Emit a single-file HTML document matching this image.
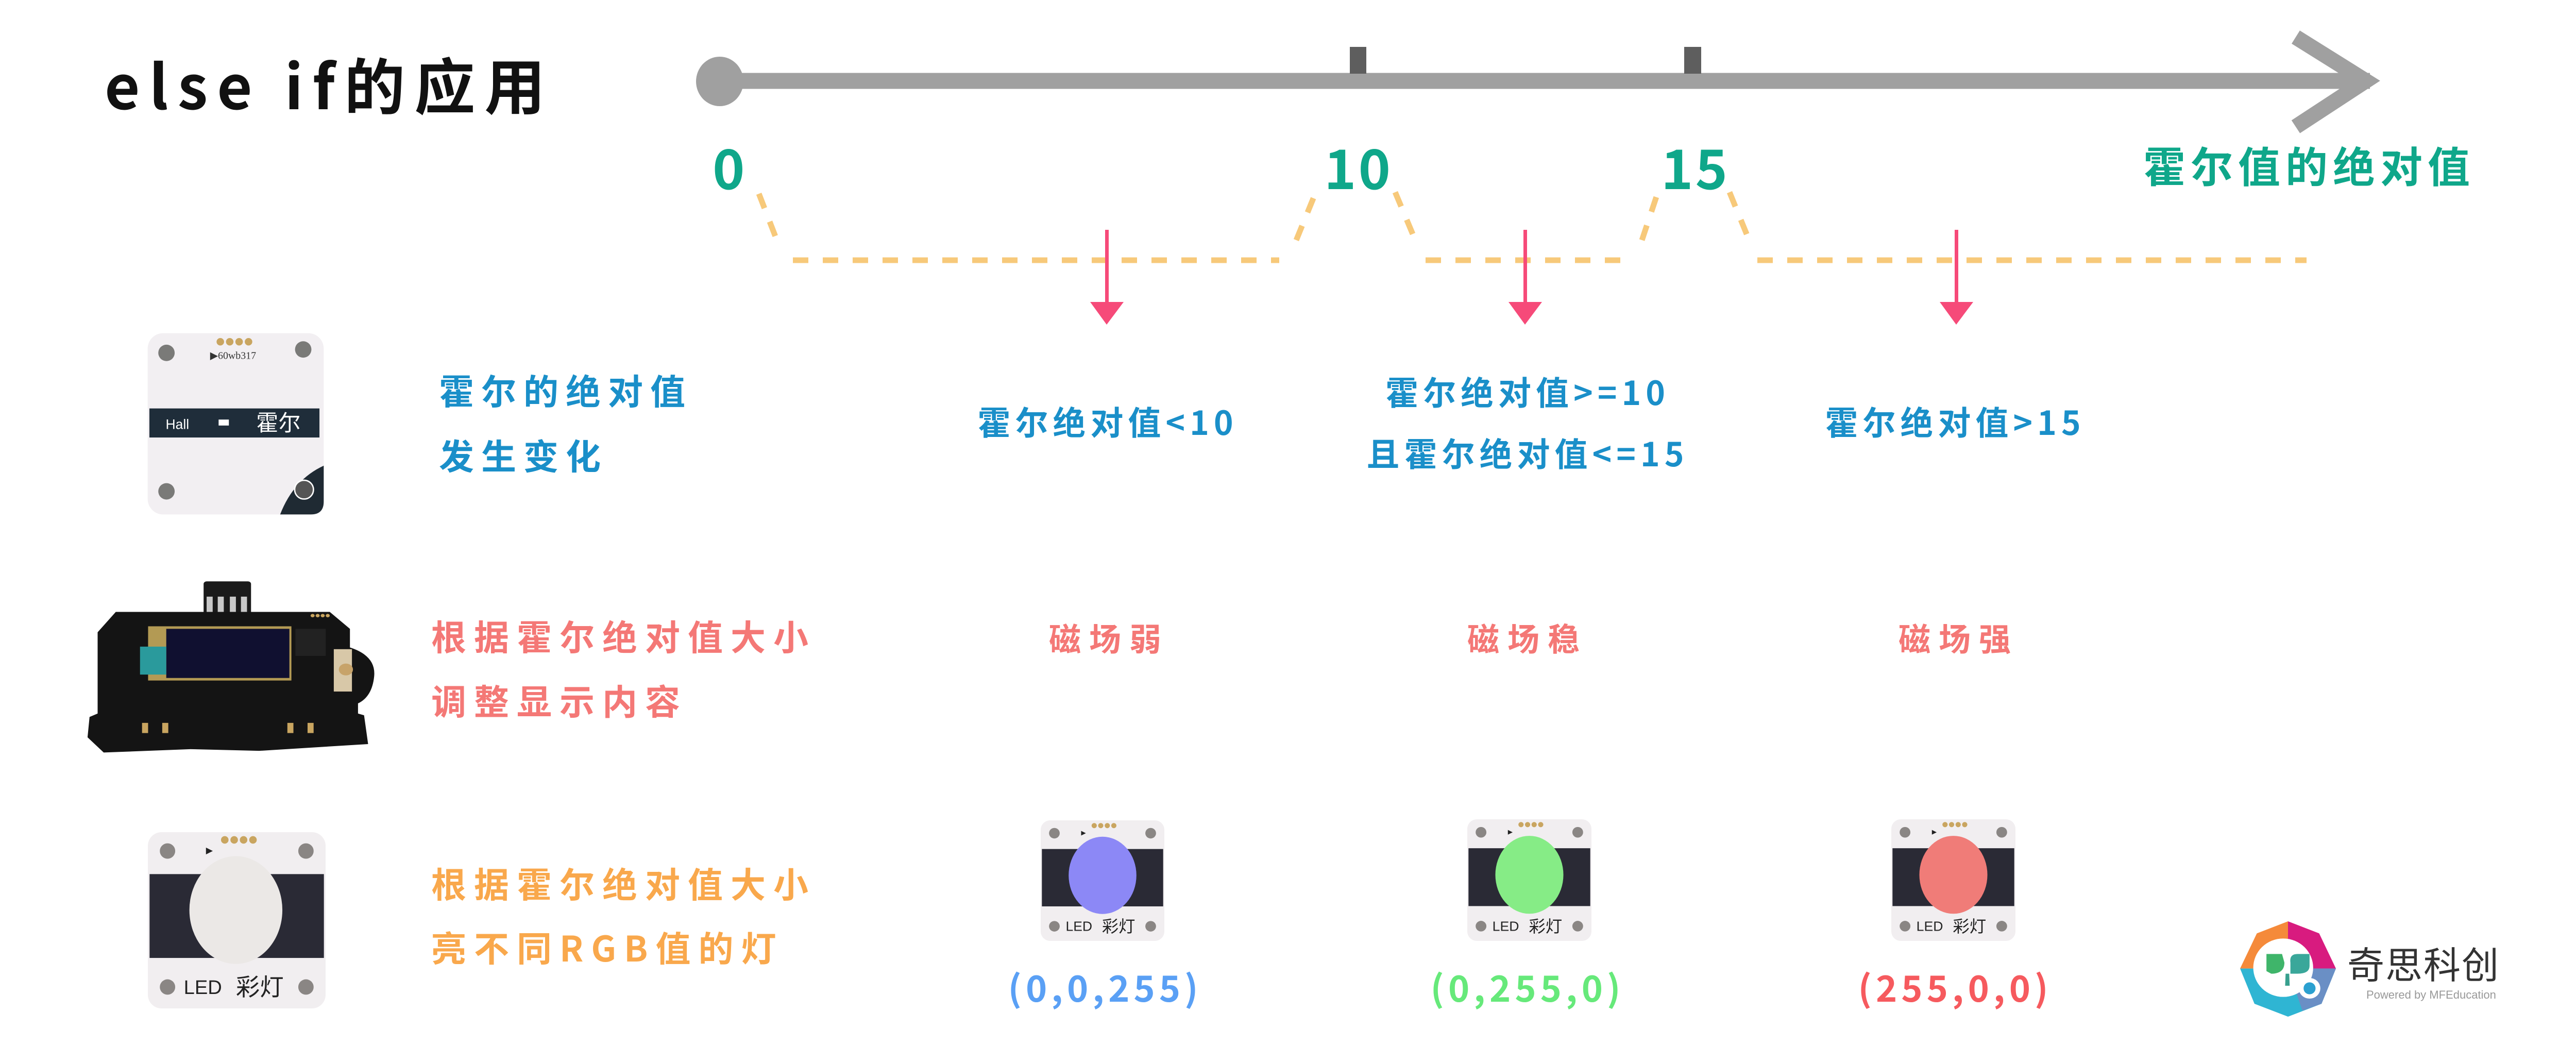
<!DOCTYPE html>
<html><head><meta charset="utf-8"><style>
html,body{margin:0;padding:0;background:#fff}
body{width:5022px;height:2061px;position:relative;overflow:hidden;font-family:"Liberation Sans","Noto Sans CJK SC",sans-serif}
.t{position:absolute;white-space:nowrap;font-family:"Noto Sans CJK SC","Liberation Sans",sans-serif;font-weight:bold;line-height:1}
.c{text-align:center}
svg.a{position:absolute}
</style></head><body>

<svg class="a" style="left:0;top:0" width="5022" height="2061" viewBox="0 0 5022 2061">
  <line x1="1397" y1="157" x2="4600" y2="157" stroke="#a0a0a0" stroke-width="31"/>
  <ellipse cx="1397" cy="158" rx="46" ry="48" fill="#a0a0a0"/>
  <polyline points="4456,72 4592,157 4456,246" fill="none" stroke="#a0a0a0" stroke-width="30"/>
  <rect x="2620" y="91" width="32" height="52" fill="#5e5e5e"/>
  <rect x="3269" y="91" width="33" height="52" fill="#5e5e5e"/>
  <g fill="none" stroke="#f7c97a" stroke-width="11" stroke-dasharray="30 28">
    <path d="M1473,376 L1509,469"/>
    <path d="M1539,505 L2483,505"/>
    <path d="M2516,466 L2554,373"/>
    <path d="M2708,373 L2747,466"/>
    <path d="M2767,505 L3164,505"/>
    <path d="M3187,466 L3218,373"/>
    <path d="M3357,373 L3395,466"/>
    <path d="M3411,505 L4477,505"/>
  </g>
  <g fill="#f64a79">
    <rect x="2145" y="446" width="7" height="150"/>
    <polygon points="2116,586 2181,586 2148,630"/>
    <rect x="2957" y="446" width="7" height="150"/>
    <polygon points="2928,586 2993,586 2960,630"/>
    <rect x="3794" y="446" width="7" height="150"/>
    <polygon points="3765,586 3830,586 3797,630"/>
  </g>
</svg>

<div class="t" style="left:203px;top:102px;font-size:118px;letter-spacing:18px;color:#111">else if的应用</div>

<div class="t" style="left:1383px;top:268px;font-size:106px;color:#0fa78a">0</div>
<div class="t" style="left:2570px;top:268px;font-size:106px;color:#0fa78a;letter-spacing:4px">10</div>
<div class="t" style="left:3224px;top:268px;font-size:106px;color:#0fa78a;letter-spacing:4px">15</div>
<div class="t" style="left:4160px;top:278px;font-size:82px;letter-spacing:10px;color:#0fa78a">霍尔值的绝对值</div>

<div class="t" style="left:852px;top:722px;font-size:68px;letter-spacing:14px;color:#1a8fc9">霍尔的绝对值</div>
<div class="t" style="left:852px;top:848px;font-size:68px;letter-spacing:14px;color:#1a8fc9">发生变化</div>

<div class="t c" style="left:1850px;width:600px;top:785px;font-size:64px;letter-spacing:9px;color:#1a8fc9">霍尔绝对值&lt;10</div>
<div class="t c" style="left:2660px;width:610px;top:727px;font-size:64px;letter-spacing:9px;color:#1a8fc9">霍尔绝对值&gt;=10</div>
<div class="t c" style="left:2620px;width:690px;top:846px;font-size:64px;letter-spacing:9px;color:#1a8fc9">且霍尔绝对值&lt;=15</div>
<div class="t c" style="left:3490px;width:610px;top:785px;font-size:64px;letter-spacing:9px;color:#1a8fc9">霍尔绝对值&gt;15</div>

<div class="t" style="left:837px;top:1199px;font-size:68px;letter-spacing:15px;color:#f47876">根据霍尔绝对值大小</div>
<div class="t" style="left:837px;top:1324px;font-size:68px;letter-spacing:15px;color:#f47876">调整显示内容</div>
<div class="t" style="left:2036px;top:1205px;font-size:62px;letter-spacing:16px;color:#f47876">磁场弱</div>
<div class="t" style="left:2848px;top:1205px;font-size:62px;letter-spacing:16px;color:#f47876">磁场稳</div>
<div class="t" style="left:3685px;top:1205px;font-size:62px;letter-spacing:16px;color:#f47876">磁场强</div>

<div class="t" style="left:837px;top:1679px;font-size:68px;letter-spacing:15px;color:#f9a84c">根据霍尔绝对值大小</div>
<div class="t" style="left:837px;top:1803px;font-size:68px;letter-spacing:15px;color:#f9a84c">亮不同RGB值的灯</div>

<div class="t c" style="left:1940px;width:410px;top:1880px;font-size:70px;letter-spacing:8px;color:#5aa0f5">(0,0,255)</div>
<div class="t c" style="left:2760px;width:410px;top:1880px;font-size:70px;letter-spacing:8px;color:#66e97a">(0,255,0)</div>
<div class="t c" style="left:3590px;width:410px;top:1880px;font-size:70px;letter-spacing:8px;color:#f65a5e">(255,0,0)</div>

<!-- Hall module -->
<svg class="a" style="left:285px;top:645px" width="345" height="355" viewBox="0 0 1040 1070" preserveAspectRatio="none">
  <rect x="5" y="5" width="1030" height="1060" rx="90" fill="#f2eff2"/>
  <path d="M1035,780 L1035,990 Q1035,1065 960,1065 L780,1065 Q860,860 1035,780Z" fill="#1f2a33"/>
  <circle cx="115" cy="120" r="48" fill="#7a7a78"/><circle cx="915" cy="100" r="48" fill="#7a7a78"/>
  <circle cx="115" cy="930" r="48" fill="#7a7a78"/><circle cx="920" cy="920" r="55" fill="#555" stroke="#fff" stroke-width="8"/>
  <g fill="#c9a560"><circle cx="430" cy="55" r="22"/><circle cx="485" cy="55" r="22"/><circle cx="540" cy="55" r="22"/><circle cx="595" cy="55" r="22"/></g>
  <text x="370" y="155" font-family="Liberation Serif,serif" font-size="60" fill="#333">▶60wb317</text>
  <rect x="15" y="445" width="995" height="170" fill="#1f2d3a"/>
  <text x="110" y="565" font-family="Liberation Sans,sans-serif" font-size="80" fill="#fff">Hall</text>
  <rect x="420" y="510" width="60" height="35" fill="#fff"/>
  <text x="640" y="575" font-family="Noto Sans CJK SC,sans-serif" font-size="130" fill="#fff">霍尔</text>
</svg>

<!-- OLED board -->
<svg class="a" style="left:166px;top:1125px" width="572" height="342" viewBox="40 70 1460 1040" preserveAspectRatio="none">
  <rect x="625" y="80" width="235" height="230" rx="15" fill="#1a1a1a"/>
  <g fill="#c8c8c8"><rect x="640" y="170" width="30" height="130"/><rect x="695" y="170" width="30" height="130"/><rect x="755" y="170" width="30" height="130"/><rect x="810" y="170" width="30" height="130"/></g>
  <path d="M190,260 L1250,260 L1350,360 L1350,470 Q1480,520 1470,640 Q1460,760 1390,800 L1390,860 L1420,870 L1440,1040 L900,1080 L560,1070 L130,1090 L50,1000 L60,880 L100,860 L100,380 Z" fill="#141414"/>
  <rect x="350" y="345" width="710" height="320" fill="#b39a54"/>
  <rect x="440" y="360" width="610" height="290" fill="#101030"/>
  <rect x="310" y="465" width="130" height="165" fill="#2a9a9c"/>
  <rect x="1270" y="480" width="90" height="250" fill="#d8c8a8"/>
  <circle cx="1330" cy="600" r="35" fill="#c7a36a"/>
  <g fill="#c9a560"><circle cx="1165" cy="282" r="10"/><circle cx="1190" cy="282" r="10"/><circle cx="1215" cy="282" r="10"/><circle cx="1240" cy="282" r="10"/></g>
  <g fill="#c9a560"><rect x="320" y="915" width="30" height="60"/><rect x="420" y="915" width="30" height="60"/><rect x="1040" y="915" width="30" height="60"/><rect x="1140" y="915" width="30" height="60"/></g>
  <rect x="1080" y="360" width="150" height="160" fill="#222"/>
</svg>

<!-- LED modules -->
<svg width="0" height="0" style="position:absolute"><defs>
<g id="led">
  <rect x="0" y="0" width="1040" height="1030" rx="80" fill="#f1eef0"/>
  <rect x="10" y="245" width="1020" height="490" fill="#2a2a35"/>
  <circle cx="115" cy="110" r="45" fill="#8a8684"/><circle cx="925" cy="110" r="45" fill="#8a8684"/>
  <circle cx="115" cy="905" r="45" fill="#8a8684"/><circle cx="925" cy="905" r="45" fill="#8a8684"/>
  <g fill="#c9a560"><circle cx="450" cy="45" r="22"/><circle cx="505" cy="45" r="22"/><circle cx="560" cy="45" r="22"/><circle cx="615" cy="45" r="22"/></g>
  <polygon points="340,90 380,110 340,130" fill="#222"/>
  <text x="210" y="945" font-family="Liberation Sans,sans-serif" font-size="115" fill="#222">LED</text>
  <text x="515" y="955" font-family="Noto Sans CJK SC,sans-serif" font-size="140" fill="#222">彩灯</text>
</g></defs></svg>

<svg class="a" style="left:287px;top:1615px" width="345" height="342" viewBox="0 0 1040 1030" preserveAspectRatio="none">
  <use href="#led"/><ellipse cx="515" cy="455" rx="272" ry="315" fill="#ebe8e6"/>
</svg>
<svg class="a" style="left:2020px;top:1592px" width="240" height="234" viewBox="0 0 1040 1030" preserveAspectRatio="none">
  <use href="#led"/><ellipse cx="520" cy="470" rx="285" ry="330" fill="#8c88f6"/>
</svg>
<svg class="a" style="left:2848px;top:1590px" width="241" height="236" viewBox="0 0 1040 1030" preserveAspectRatio="none">
  <use href="#led"/><ellipse cx="520" cy="470" rx="285" ry="330" fill="#86ec86"/>
</svg>
<svg class="a" style="left:3671px;top:1590px" width="241" height="236" viewBox="0 0 1040 1030" preserveAspectRatio="none">
  <use href="#led"/><ellipse cx="520" cy="470" rx="285" ry="330" fill="#f07c78"/>
</svg>

<!-- Logo -->
<svg class="a" style="left:4348px;top:1788px" width="186" height="185" viewBox="0 0 400 555" preserveAspectRatio="none">
  <polygon points="200,0 330,70 400,275 200,275" fill="#d81b7f"/>
  <polygon points="200,0 70,70 0,275 200,275" fill="#f58a3a"/>
  <polygon points="0,275 400,275 340,480 200,555 60,480" fill="#2fb5d3"/>
  <polygon points="200,275 400,275 340,480 260,520" fill="#6a8fc5"/>
  <ellipse cx="180" cy="270" rx="125" ry="170" fill="#fff"/>
  <ellipse cx="290" cy="390" rx="45" ry="60" fill="#fff"/>
  <ellipse cx="290" cy="390" rx="25" ry="35" fill="#2ba0d0"/>
  <path d="M110,190 L175,190 L185,240 Q185,305 130,305 L110,290Z" fill="#3fb56a"/>
  <path d="M210,240 Q205,190 240,190 L290,190 L290,260 Q290,305 240,305 L210,305Z" fill="#3aa79a"/>
  <polygon points="190,305 205,305 207,375 188,375" fill="#38a08e"/>
</svg>
<div class="t" style="left:4556px;top:1832px;font-size:72px;font-weight:normal;color:#333;letter-spacing:2px">奇思科创</div>
<div style="position:absolute;left:4593px;top:1918px;font-size:22px;color:#999;font-family:'Liberation Sans',sans-serif;white-space:nowrap">Powered by MFEducation</div>

</body></html>
